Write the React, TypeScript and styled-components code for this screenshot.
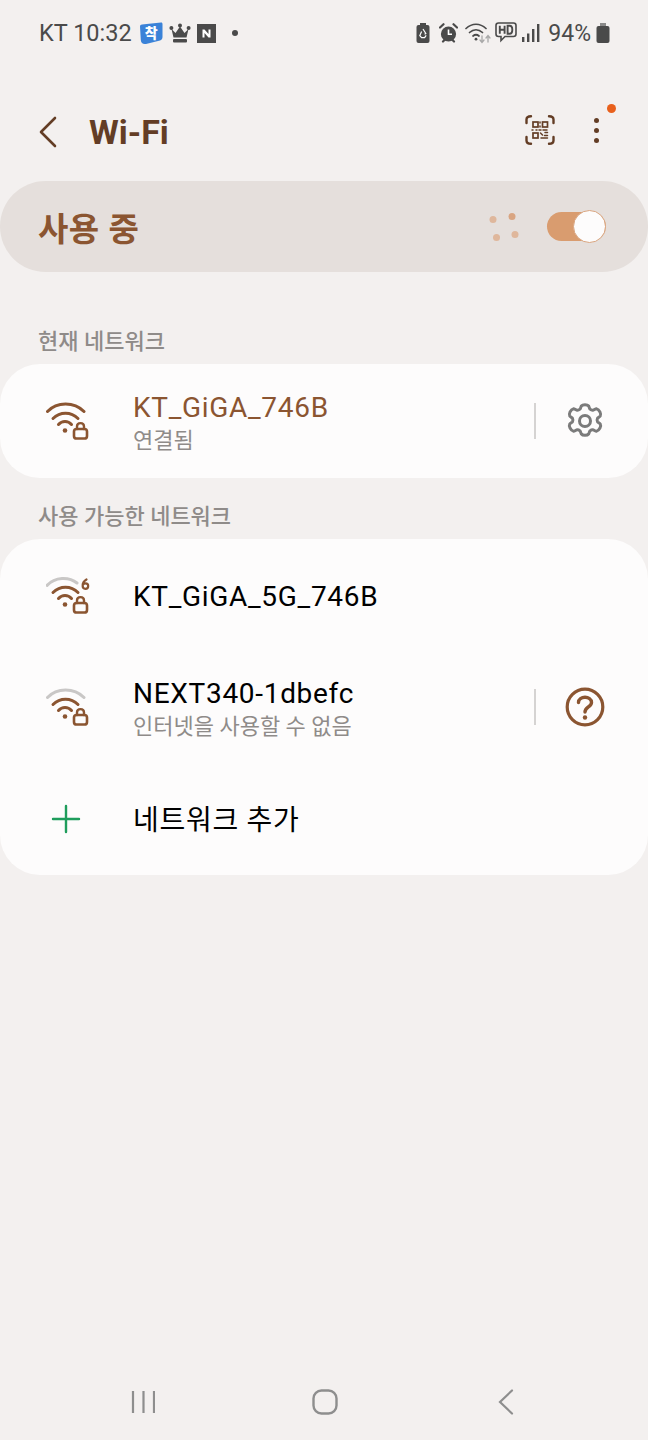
import styled, { createGlobalStyle } from "styled-components";

const Global = createGlobalStyle`
    html, body {
        margin: 0;
        padding: 0;
        background: #f3f0ef;
    }
    * {
        box-sizing: border-box;
    }
`;

const brown = "#8b5531";
const dark = "#633d25";
const gray = "#4a4a4a";

const WifiLock = ({ weak, six }: { weak?: boolean; six?: boolean }) => (
    <svg width="44" height="40" viewBox="0 0 44 40" fill="none" strokeLinecap="round">
        <path
            d={six ? "M1 10.5C9 1.5 23 1.5 31 8" : "M1.5 10.5C11 .5 28 .5 38 10.5"}
            stroke={weak ? "#c9c7c6" : brown}
            strokeWidth="3"
        />
        <path d="M7 17.5C14 10.5 25 10.5 32 17.5" stroke={brown} strokeWidth="3" />
        <path d="M12.5 23.5C16 19.5 22 19.5 25.5 23.5" stroke={brown} strokeWidth="3" />
        <circle cx="19" cy="29.5" r="2.3" fill={brown} />
        <rect x="28" y="28" width="13" height="9.5" rx="2.6" stroke={brown} strokeWidth="2.6" />
        <path d="M31 28V25.5C31 21 38 21 38 25.5V28" stroke={brown} strokeWidth="2.4" />
        {six && <path d="M40.5 4.5C38 6 36.6 8.2 36.6 10.5C36.6 12.6 38 13.8 39.4 13.8C41 13.8 42.2 12.6 42.2 11C42.2 9.4 41 8.4 39.6 8.4C38.4 8.4 37.4 9 36.7 10" stroke={brown} strokeWidth="2.2" />}
    </svg>
);

const Gear = () => (
    <svg width="40" height="40" viewBox="0 0 24 24" fill="none" stroke="#7b7b7b" strokeWidth="1.8" strokeLinejoin="round">
        <path d="M12 2.2c1 0 1.8.3 2.2.8.3.5.4 1.5.8 1.9.5.4 1.3.7 1.9.6.7-.2 1.4-.9 2.1-.8.7.2 1.5 1 2 1.9.4.9.5 1.8.2 2.3-.4.6-1.4 1-1.7 1.5-.3.6-.3 1.4 0 2 .3.5 1.3.9 1.7 1.5.3.5.2 1.4-.2 2.3-.5.9-1.3 1.7-2 1.9-.7.1-1.4-.6-2.1-.8-.6-.1-1.4.2-1.9.6-.4.4-.5 1.4-.8 1.9-.4.5-1.2.8-2.2.8s-1.8-.3-2.2-.8c-.3-.5-.4-1.5-.8-1.9-.5-.4-1.3-.7-1.9-.6-.7.2-1.4.9-2.1.8-.7-.2-1.5-1-2-1.9-.4-.9-.5-1.8-.2-2.3.4-.6 1.4-1 1.7-1.5.3-.6.3-1.4 0-2-.3-.5-1.3-.9-1.7-1.5-.3-.5-.2-1.4.2-2.3.5-.9 1.3-1.7 2-1.9.7-.1 1.4.6 2.1.8.6.1 1.4-.2 1.9-.6.4-.4.5-1.4.8-1.9.4-.5 1.2-.8 2.2-.8z" />
        <circle cx="12" cy="12" r="3.3" />
    </svg>
);

const Help = () => (
    <svg width="40" height="40" viewBox="0 0 40 40" fill="none" stroke={brown} strokeLinecap="round">
        <circle cx="20" cy="20" r="17.8" strokeWidth="3.2" />
        <path d="M13.5 15.5C13.5 8.5 26.5 8.5 26.5 15.5C26.5 20 20 20 20 25" strokeWidth="3.4" />
        <circle cx="20" cy="30.5" r="2.2" fill={brown} stroke="none" />
    </svg>
);

const QrIcon = () => (
    <QrSvg width="30" height="30" viewBox="0 0 30 30" fill="none" stroke={dark} strokeWidth="2.4" strokeLinecap="round">
        <path d="M1.5 8V4.5C1.5 2.5 3 1.2 6 1.2M24 1.2C27 1.2 28.5 2.5 28.5 4.5V8M1.5 22V25.5C1.5 27.5 3 28.8 6 28.8M24 28.8C27 28.8 28.5 27.5 28.5 25.5V22" />
        <rect x="8" y="7" width="5" height="5" strokeWidth="1.7" />
        <rect x="17.5" y="7" width="5" height="5" strokeWidth="1.7" />
        <rect x="8" y="18" width="5" height="5" strokeWidth="1.7" />
        <path d="M15 7v1M15 11v1M7 15h1M11 15h1M14 15h2M18 15h4M15.5 18l2 2M20 17.5h2.5M16 23h6.5M19.5 20.5h3" strokeWidth="1.5" />
    </QrSvg>
);

const StatusLeft = () => (
    <>
        <svg width="24" height="24" viewBox="0 0 24 24">
            <path d="M3 3.5L22 1.5C23 1.4 23.5 2 23.5 3V16C23.5 18 22.5 19 21 19.5L7 23C4 23.6 2 22 1.8 19L1 5.5C1 4.3 1.8 3.6 3 3.5Z" fill="#3a82d8" />
            <BadgeGlyph x="12.2" y="16.5">착</BadgeGlyph>
        </svg>
        <svg width="22" height="20" viewBox="0 0 22 20" fill={gray}>
            <circle cx="2.4" cy="5" r="2" />
            <circle cx="11" cy="2.4" r="2" />
            <circle cx="19.6" cy="5" r="2" />
            <path d="M2.5 6L6.5 10L11 3.5L15.5 10L19.5 6L17.5 14.5H4.5Z" />
            <rect x="4" y="16" width="14" height="3.4" rx="1" />
        </svg>
        <svg width="19" height="19" viewBox="0 0 19 19">
            <rect width="19" height="19" fill={gray} />
            <path d="M5.5 13.5V5.5H7.5L11.5 10V5.5H13.5V13.5H11.5L7.5 9V13.5Z" fill="#fff" />
        </svg>
    </>
);

export default function App() {
    return (
        <Page>
            <Global />
            <StatusBar>
                <StatusText>KT 10:32</StatusText>
                <StatusLeft />
                <StatusDot />
                <Spacer />
                <StatusSlot>
                    <svg width="14" height="20" viewBox="0 0 14 20">
                        <rect x="4" y="0" width="6" height="3" fill={gray} />
                        <rect x="0.5" y="2" width="13" height="18" rx="2" fill={gray} />
                        <path d="M7 6L9.8 10.5L8.6 11.2M5.6 8.4L3.8 12.6L5.6 14.6H8.6L10.2 12.4" fill="none" stroke="#fff" strokeWidth="1.2" />
                    </svg>
                </StatusSlot>
                <StatusSlot $ml={9}>
                    <svg width="19" height="20" viewBox="0 0 19 20">
                        <circle cx="9.5" cy="11" r="7.6" fill={gray} />
                        <path d="M9.5 6.5V11.3H13" stroke="#fff" strokeWidth="1.6" fill="none" />
                        <path d="M1 4.5L4.5 1.2M18 4.5L14.5 1.2M4 18.5L5.5 17M15 18.5L13.5 17" stroke={gray} strokeWidth="2.2" strokeLinecap="round" />
                    </svg>
                </StatusSlot>
                <StatusSlot $ml={7}>
                    <svg width="26" height="22" viewBox="0 0 26 22" fill="none" strokeLinecap="round">
                        <path d="M1 6.5C7 .8 15 .8 21 6.5" stroke={gray} strokeWidth="1.7" />
                        <path d="M4.5 10.5C8.5 6.8 13.5 6.8 17.5 10.5" stroke={gray} strokeWidth="1.7" />
                        <path d="M8 14C9.8 12.5 12.2 12.5 14 14" stroke={gray} strokeWidth="1.7" />
                        <circle cx="11" cy="17.2" r="1.4" fill={gray} />
                        <path d="M17 14V20M15 18L17 20.5L19 18" stroke="#a8a8a8" strokeWidth="1.3" />
                        <path d="M23 20V14M21 16L23 13.5L25 16" stroke="#a8a8a8" strokeWidth="1.3" />
                    </svg>
                </StatusSlot>
                <StatusSlot $ml={4}>
                    <svg width="22" height="22" viewBox="0 0 22 22" fill="none">
                        <path d="M3.5 1H18.5C20 1 21 2 21 3.5V12C21 13.5 20 14.5 18.5 14.5H10L6 18.5V14.5H3.5C2 14.5 1 13.5 1 12V3.5C1 2 2 1 3.5 1Z" stroke={gray} strokeWidth="1.6" />
                        <path d="M4.8 3.8V11.8M9.6 3.8V11.8M4.8 7.8H9.6M12.6 3.8V11.8H14.6C18.2 11.8 18.2 3.8 14.6 3.8Z" stroke={gray} strokeWidth="1.9" />
                    </svg>
                </StatusSlot>
                <StatusSlot $ml={5}>
                    <svg width="18" height="18" viewBox="0 0 18 18" fill={gray}>
                        <rect x="0" y="13" width="2.4" height="5" />
                        <rect x="5" y="9.5" width="2.4" height="8.5" />
                        <rect x="10" y="5" width="2.4" height="13" />
                        <rect x="15" y="0" width="2.4" height="18" />
                    </svg>
                </StatusSlot>
                <Percent>94%</Percent>
                <StatusSlot $ml={5}>
                    <svg width="14" height="20" viewBox="0 0 14 20" fill={gray}>
                        <rect x="4" y="0" width="6" height="3" fill="#8a8a8a" />
                        <rect x="0.5" y="3" width="13" height="17" rx="2" />
                    </svg>
                </StatusSlot>
            </StatusBar>

            <Header>
                <svg width="20" height="32" viewBox="0 0 20 32" fill="none">
                    <path d="M17 2L3 16L17 30" stroke={dark} strokeWidth="2.6" strokeLinecap="round" strokeLinejoin="round" />
                </svg>
                <Title>Wi-Fi</Title>
                <Spacer />
                <QrIcon />
                <MenuButton>
                    <MenuDot />
                    <MenuDot />
                    <MenuDot />
                    <Badge />
                </MenuButton>
            </Header>

            <Banner>
                <BannerText>사용 중</BannerText>
                <Spacer />
                <svg width="30" height="32" viewBox="0 0 30 32" fill="#dfb79c">
                    <circle cx="4" cy="8.5" r="3.5" />
                    <circle cx="23" cy="5.5" r="3.5" fill="#d9a582" />
                    <circle cx="7.5" cy="26.5" r="3.5" />
                    <circle cx="26" cy="23.5" r="3.5" />
                </svg>
                <Toggle>
                    <Thumb />
                </Toggle>
            </Banner>

            <SectionLabel>현재 네트워크</SectionLabel>
            <Card>
                <Row $height={114}>
                    <IconCell><WifiLock /></IconCell>
                    <RowText>
                        <NetworkName $active>KT_GiGA_746B</NetworkName>
                        <NetworkSub>연결됨</NetworkSub>
                    </RowText>
                    <Divider />
                    <TrailIcon><Gear /></TrailIcon>
                </Row>
            </Card>

            <SectionLabel $second>사용 가능한 네트워크</SectionLabel>
            <Card>
                <Row $height={112}>
                    <IconCell><WifiLock weak six /></IconCell>
                    <RowText>
                        <NetworkName>KT_GiGA_5G_746B</NetworkName>
                    </RowText>
                </Row>
                <Row $height={112}>
                    <IconCell><WifiLock weak /></IconCell>
                    <RowText>
                        <NetworkName>NEXT340-1dbefc</NetworkName>
                        <NetworkSub>인터넷을 사용할 수 없음</NetworkSub>
                    </RowText>
                    <Divider />
                    <TrailIcon><Help /></TrailIcon>
                </Row>
                <Row $height={112}>
                    <IconCell>
                        <PlusIcon width="30" height="30" viewBox="0 0 30 30" stroke="#1f9d5c" strokeWidth="2.4" strokeLinecap="round">
                            <path d="M15 2V28M2 15H28" />
                        </PlusIcon>
                    </IconCell>
                    <RowText>
                        <NetworkName>네트워크 추가</NetworkName>
                    </RowText>
                </Row>
            </Card>

            <NavBar>
                <svg width="24" height="24" viewBox="0 0 24 24" stroke="#8e8e8e" strokeWidth="2.2">
                    <path d="M2 1V23M12.5 1V23M23 1V23" />
                </svg>
                <svg width="26" height="26" viewBox="0 0 26 26" fill="none" stroke="#8e8e8e" strokeWidth="2.4">
                    <rect x="1.5" y="1.5" width="23" height="23" rx="8" />
                </svg>
                <svg width="19" height="26" viewBox="0 0 19 26" fill="none" stroke="#8e8e8e" strokeWidth="2.2" strokeLinecap="round">
                    <path d="M17 1.5L5 13L17 24.5" />
                </svg>
            </NavBar>
        </Page>
    );
}

const Page = styled.div`
    font-family: Roboto, "Noto Sans CJK KR", sans-serif;
    width: 648px;
    height: 1440px;
    background: #f3f0ef;
    display: flex;
    flex-direction: column;
    overflow: hidden;
`;

const StatusBar = styled.div`
    height: 66px;
    flex-shrink: 0;
    padding: 0 38px 0 39px;
    display: flex;
    align-items: center;
    color: ${gray};

    > svg {
        margin-left: 6px;
    }
`;

const BadgeGlyph = styled.text`
    font-family: "Noto Sans CJK KR", sans-serif;
    font-size: 14px;
    font-weight: 900;
    fill: #fff;
    text-anchor: middle;
`;

const StatusText = styled.span`
    font-size: 23.5px;
    margin-right: 1px;
`;

const StatusSlot = styled.span<{ $ml?: number }>`
    display: flex;
    margin-left: ${(p) => p.$ml ?? 0}px;
`;

const StatusDot = styled.span`
    width: 6px;
    height: 6px;
    border-radius: 50%;
    background: ${gray};
    margin-left: 16px;
`;

const Percent = styled.span`
    font-size: 23px;
    margin-left: 8px;
`;

const Spacer = styled.div`
    flex: 1;
`;

const Header = styled.div`
    height: 115px;
    flex-shrink: 0;
    padding: 16px 49px 0 38px;
    display: flex;
    align-items: center;
`;

const Title = styled.h1`
    margin: 0 0 0 31px;
    font-size: 34px;
    font-weight: 700;
    color: ${dark};
`;

const QrSvg = styled.svg`
    margin-bottom: 3px;
`;

const MenuButton = styled.div`
    position: relative;
    display: flex;
    flex-direction: column;
    gap: 5px;
    margin: 0 0 2px 39px;
`;

const MenuDot = styled.span`
    width: 5px;
    height: 5px;
    border-radius: 50%;
    background: ${dark};
`;

const Badge = styled.span`
    position: absolute;
    top: -14px;
    left: 13px;
    width: 9px;
    height: 9px;
    border-radius: 50%;
    background: #e8601c;
`;

const Banner = styled.div`
    height: 91px;
    flex-shrink: 0;
    border-radius: 46px;
    background: #e5dfdc;
    padding: 0 42px 0 38px;
    display: flex;
    align-items: center;
`;

const BannerText = styled.span`
    font-size: 33px;
    font-weight: 700;
    letter-spacing: 0.5px;
    color: ${brown};
`;

const Toggle = styled.div`
    position: relative;
    width: 59px;
    height: 29px;
    margin-left: 28px;
    border-radius: 15px;
    background: #d99c6f;
`;

const Thumb = styled.span`
    position: absolute;
    top: -2px;
    right: 0;
    width: 33px;
    height: 33px;
    border-radius: 50%;
    background: #fdfcfc;
    border: 1.5px solid #d9a580;
`;

const SectionLabel = styled.div<{ $second?: boolean }>`
    margin-top: ${(p) => (p.$second ? "23px" : "54px")};
    height: 38px;
    flex-shrink: 0;
    padding: 0 38px 13px;
    display: flex;
    align-items: center;
    font-size: 22px;
    font-weight: 500;
    color: #8f8b89;
`;

const Card = styled.div`
    background: #fdfcfc;
    border-radius: 40px;
    flex-shrink: 0;
`;

const Row = styled.div<{ $height: number }>`
    height: ${(p) => p.$height}px;
    display: flex;
    align-items: center;
    padding: 0 42px 0 0;
`;

const IconCell = styled.div`
    width: 133px;
    padding-left: 46px;
    display: flex;
    align-items: center;
`;

const PlusIcon = styled.svg`
    margin-left: 5px;
`;

const RowText = styled.div`
    flex: 1;
    display: flex;
    flex-direction: column;
    gap: 3px;
    padding-top: 3px;
`;

const NetworkName = styled.span<{ $active?: boolean }>`
    font-size: 28px;
    letter-spacing: 0.7px;
    line-height: 33px;
    color: ${(p) => (p.$active ? brown : "#000")};
`;

const NetworkSub = styled.span`
    font-size: 22px;
    line-height: 28px;
    color: #8f8b89;
`;

const Divider = styled.div`
    width: 2px;
    height: 36px;
    background: #d5d3d2;
`;

const TrailIcon = styled.div`
    width: 42px;
    margin-left: 28px;
    display: flex;
    justify-content: center;
`;

const NavBar = styled.div`
    margin-top: auto;
    height: 76px;
    flex-shrink: 0;
    padding: 0 134px 0 131px;
    display: flex;
    align-items: center;
    gap: 157px;
`;
